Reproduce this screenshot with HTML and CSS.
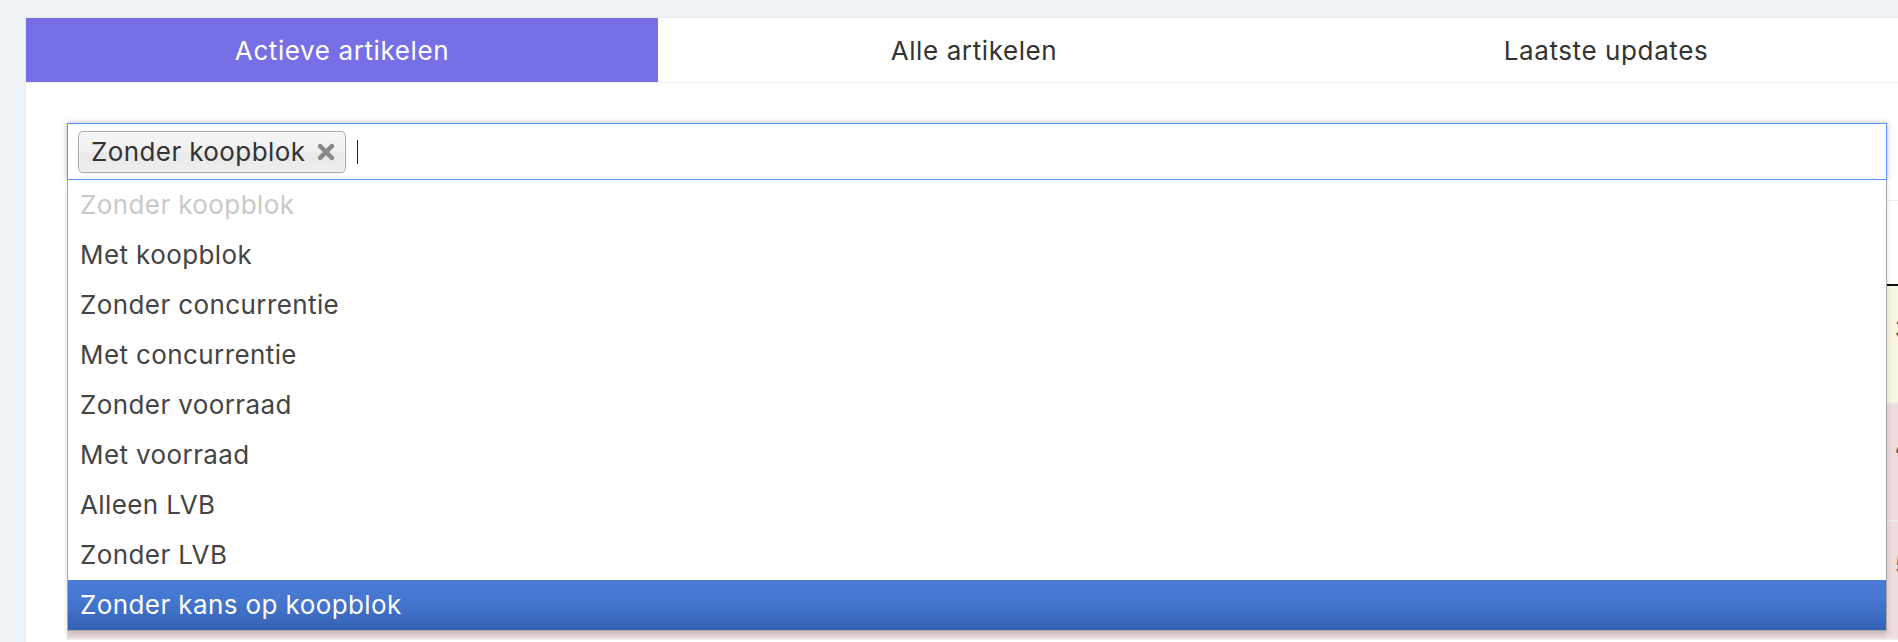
FILE: index.html
```html
<!DOCTYPE html>
<html lang="nl">
<head>
<meta charset="utf-8">
<title>Artikelen</title>
<link rel="stylesheet" href="styles.css">
</head>
<body>
<div class="page">
  <div class="card">
    <nav class="tabs">
      <div class="tab active">Actieve artikelen</div>
      <div class="tab">Alle artikelen</div>
      <div class="tab">Laatste updates</div>
    </nav>
    <div class="card-body">
      <div class="select">
        <div class="choices">
          <span class="chip">
            <span class="chip-label">Zonder koopblok</span>
            <svg class="chip-close" viewBox="0 0 16 16" width="18" height="18" aria-hidden="true">
              <path d="M2.8 2.8 L13.2 13.2 M13.2 2.8 L2.8 13.2" stroke="#888" stroke-width="4" stroke-linecap="round"/>
            </svg>
          </span>
          <span class="caret"></span>
        </div>
        <ul class="results">
          <li class="result disabled">Zonder koopblok</li>
          <li class="result">Met koopblok</li>
          <li class="result">Zonder concurrentie</li>
          <li class="result">Met concurrentie</li>
          <li class="result">Zonder voorraad</li>
          <li class="result">Met voorraad</li>
          <li class="result">Alleen LVB</li>
          <li class="result">Zonder LVB</li>
          <li class="result highlighted">Zonder kans op koopblok</li>
        </ul>
      </div>
      <div class="table">
        <div class="thead"></div>
        <div class="row warning"><span class="spacer"></span><span class="num">3</span></div>
        <div class="row danger"><span class="spacer"></span><span class="num">4</span></div>
        <div class="row danger"><span class="spacer"></span><span class="num">5</span></div>
      </div>
    </div>
  </div>
</div>
</body>
</html>
```

FILE: styles.css
```css
html, body {
  margin: 0;
  padding: 0;
  overflow: hidden;
}

body {
  background: #eef3f8;
  font-family: "Inter", "Noto Sans", "DejaVu Sans", sans-serif;
  color: #333;
}

.page {
  padding: 18px 0 0 26px;
}

.card {
  width: 1896px;
  min-height: 700px;
  background: #fff;
  box-shadow: 0 0 3px rgba(0, 0, 0, 0.08);
}

.tabs {
  display: flex;
  height: 64px;
  border-bottom: 1px solid #f1f1f1;
}

.tab {
  flex: 1;
  display: flex;
  align-items: center;
  justify-content: center;
  font-size: 26px;
  color: #333;
  letter-spacing: 0.6px;
}

.tab.active {
  background: #766fe6;
  color: #fff;
}

.card-body {
  padding: 40px 0 0 41px;
}

.select {
  position: relative;
  width: 1820px;
}

.choices {
  box-sizing: border-box;
  height: 57px;
  border: 1px solid #5897fb;
  box-shadow: 0 0 5px rgba(0, 0, 0, 0.3);
  background: #fff;
  display: flex;
  align-items: center;
  padding-left: 10px;
}

.chip {
  box-sizing: border-box;
  height: 42px;
  display: flex;
  align-items: center;
  gap: 12px;
  padding: 0 10px 0 12px;
  border: 1px solid #aaa;
  border-radius: 5px;
  background: linear-gradient(#f4f4f4 20%, #f0f0f0 50%, #e8e8e8 52%, #eee 100%);
  box-shadow: 0 0 2px #fff inset, 0 1px 0 rgba(0, 0, 0, 0.05);
  font-size: 26px;
  letter-spacing: 0.4px;
  color: #333;
}

.chip-close {
  display: block;
}

.caret {
  width: 1px;
  height: 24px;
  background: #222;
  margin-left: 11px;
}

.results {
  position: absolute;
  top: 100%;
  left: 0;
  right: 0;
  z-index: 5;
  margin: 0;
  padding: 0;
  list-style: none;
  background: #fff;
  border: 1px solid #aaa;
  border-top: 0;
  box-shadow: 0 4px 5px rgba(0, 0, 0, 0.15);
}

.result {
  height: 50px;
  line-height: 50px;
  padding-left: 12px;
  font-size: 26px;
  letter-spacing: 0.4px;
  color: #444;
}

.result.disabled {
  color: #c9c9c9;
}

.result.highlighted {
  background: linear-gradient(#4a7bd6 0%, #4577d1 40%, #3461b3 100%);
  color: #fff;
}

.table {
  margin-top: 20px;
  border-top: 1px solid #eee;
}

.thead {
  height: 83px;
  border-bottom: 2px solid #111;
}

.row {
  display: grid;
  grid-template-columns: 1828px 1fr;
  height: 116px;
  border-bottom: 2px solid #ececec;
}

.row.warning {
  background: #f8f5e3;
}

.row.danger {
  background: #eedcdc;
}

.num {
  padding-top: 28px;
  font-size: 25px;
  line-height: 30px;
  font-weight: 600;
  color: #555;
}
```
